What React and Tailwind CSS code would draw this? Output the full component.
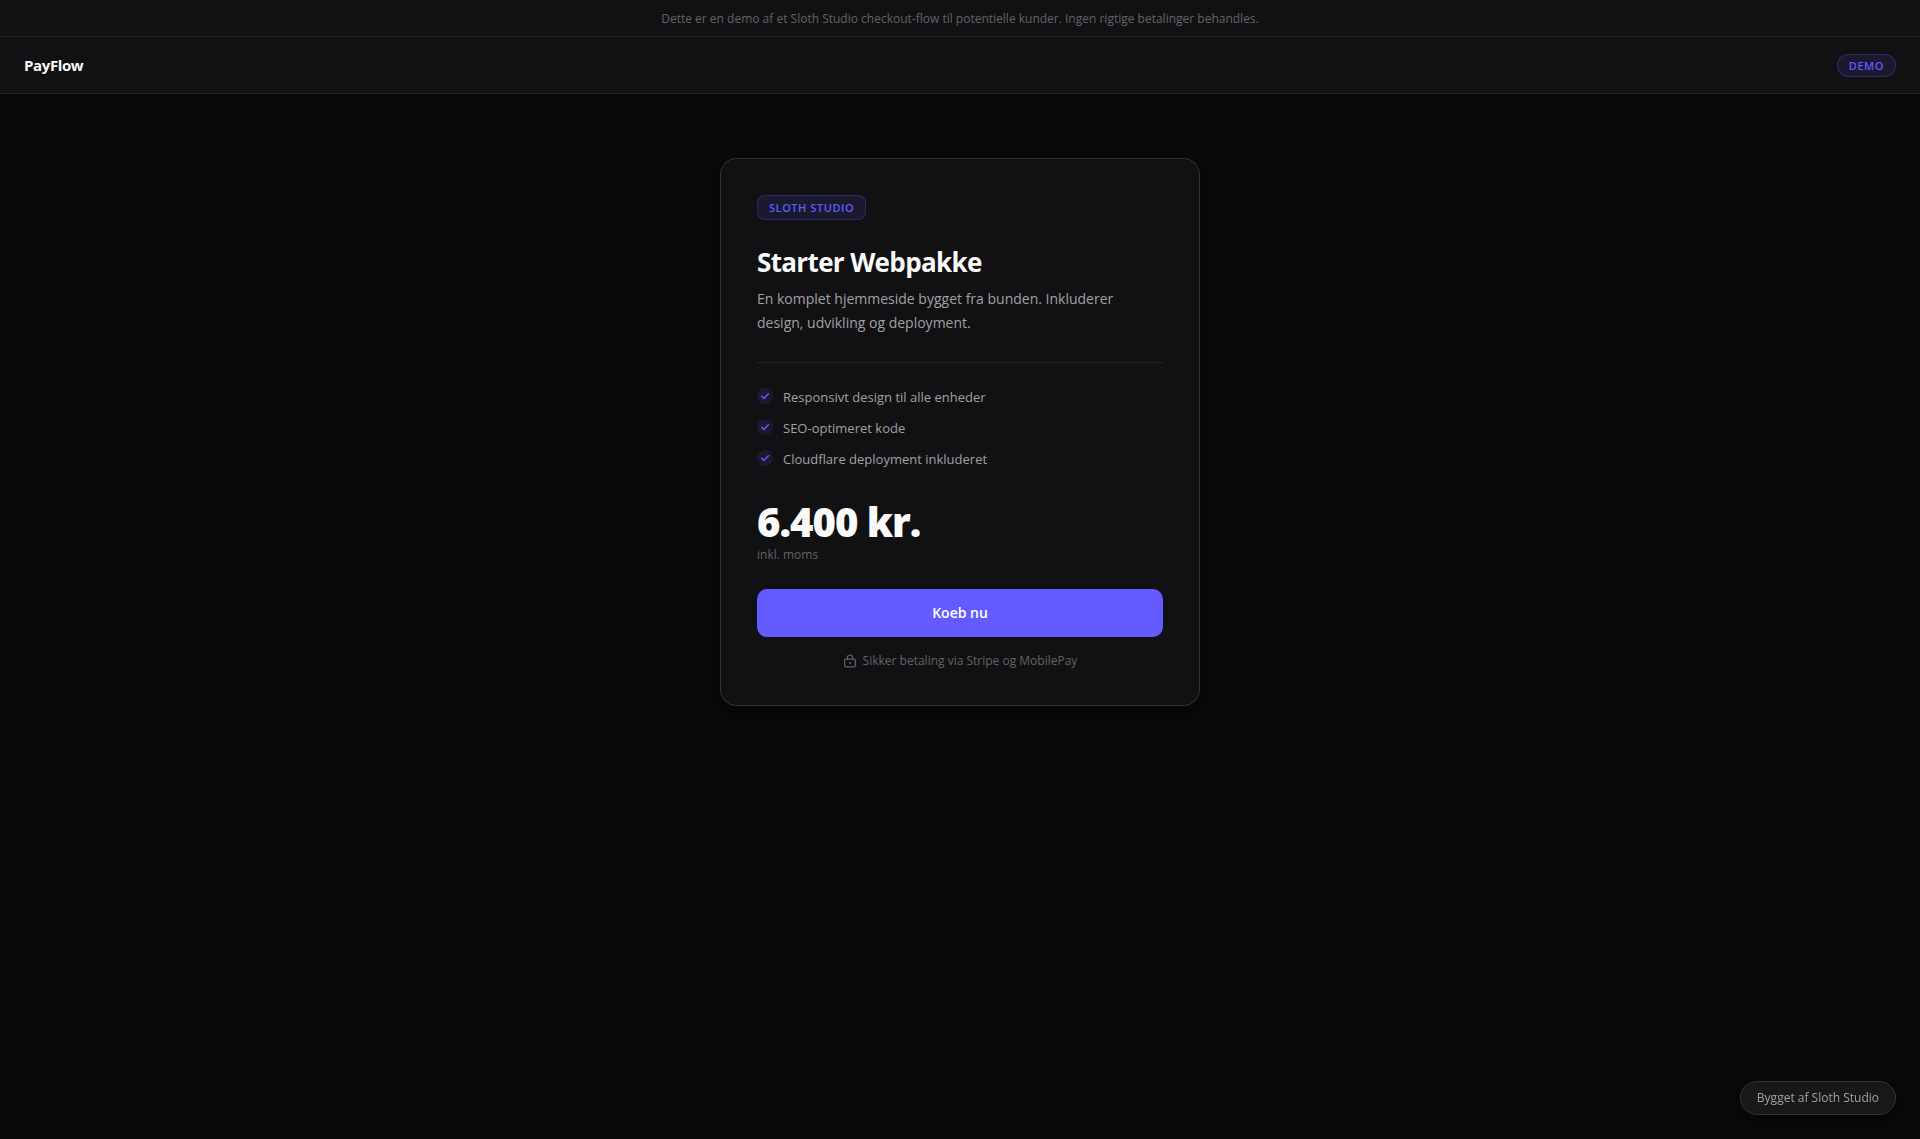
import React from 'react';

const features = [
  'Responsivt design til alle enheder',
  'SEO-optimeret kode',
  'Cloudflare deployment inkluderet',
];

const CheckIcon = () => (
  <svg width="16" height="16" viewBox="0 0 16 16" fill="none" className="mt-px shrink-0" aria-hidden="true">
    <circle cx="8" cy="8" r="8" fill="#635bff" fillOpacity="0.12" />
    <path d="M4.7 8.3l2.2 2.1 4.5-4.6" stroke="#635bff" strokeWidth="1.5" strokeLinecap="round" strokeLinejoin="round" />
  </svg>
);

const LockIcon = () => (
  <svg width="14" height="14" viewBox="0 0 14 14" fill="none" className="shrink-0" aria-hidden="true">
    <rect x="1.6" y="5.2" width="10.8" height="7.6" rx="1.6" stroke="currentColor" strokeWidth="1.2" />
    <path d="M4.4 5.2V3.6a2.6 2.6 0 0 1 5.2 0v1.6" stroke="currentColor" strokeWidth="1.2" strokeLinecap="round" />
    <circle cx="7" cy="9" r="1" fill="currentColor" />
  </svg>
);

const App = () => {
  return (
    <div className="min-h-screen flex flex-col bg-[#09090b] text-[#fafafa] font-['Open_Sans','Noto_Sans',sans-serif]">
      {/* DEMO NOTICE */}
      <div className="px-6 pt-[9px] pb-[7px] bg-[#111113] border-b border-[#222225] text-center text-xs leading-5 text-[#636366]">
        Dette er en demo af et Sloth Studio checkout-flow til potentielle kunder. Ingen rigtige betalinger behandles.
      </div>

      {/* HEADER */}
      <header className="px-6 py-4 flex items-center justify-between bg-[#111113] border-b border-[#222225]">
        <a href="#" className="text-[15px] leading-6 font-bold tracking-tight">PayFlow</a>
        <span className="px-[11px] py-[3px] rounded-full border border-[#635bff]/25 bg-[#635bff]/12 text-[11px] leading-[15px] font-semibold tracking-wider text-[#635bff]">
          DEMO
        </span>
      </header>

      {/* PRODUCT */}
      <main className="flex-1 flex justify-center items-start px-6 py-16">
        <section className="w-full max-w-[480px] p-9 rounded-2xl bg-[#111113] border border-[#333336] shadow-[0_4px_24px_rgba(0,0,0,0.4)]">
          <span className="inline-block px-[11px] py-1 rounded-lg border border-[#635bff]/25 bg-[#635bff]/12 text-[11px] leading-[15px] font-semibold tracking-wider text-[#635bff] align-top">
            SLOTH STUDIO
          </span>

          <h1 className="mt-6 text-[26px] leading-9 font-bold tracking-tight">Starter Webpakke</h1>
          <p className="mt-[7px] text-sm leading-6 text-[#a1a1a4]">
            En komplet hjemmeside bygget fra bunden. Inkluderer design, udvikling og deployment.
          </p>

          <hr className="mt-[27px] mb-6 border-[#222225]" />

          <ul className="flex flex-col gap-[10px]">
            {features.map((feature) => (
              <li key={feature} className="flex items-start gap-[10px] text-[13px] leading-[21px] text-[#a1a1a4]">
                <CheckIcon />
                {feature}
              </li>
            ))}
          </ul>

          <div className="mt-8">
            <p className="text-[40px] leading-10 font-extrabold tracking-tight">6.400 kr.</p>
            <p className="mt-[3px] text-xs leading-5 text-[#636366]">inkl. moms</p>
          </div>

          <button type="button" className="mt-6 w-full h-12 rounded-[10px] bg-[#635bff] hover:bg-[#5249f0] text-sm font-semibold text-white cursor-pointer transition-colors">
            Koeb nu
          </button>

          <p className="mt-4 flex items-center justify-center gap-[6px] text-xs leading-4 text-[#636366]">
            <LockIcon />
            Sikker betaling via Stripe og MobilePay
          </p>
        </section>
      </main>

      {/* FLOATING CREDIT */}
      <a href="#" className="fixed right-6 bottom-6 px-4 py-[7px] rounded-full bg-[#18181b] border border-[#333336] text-xs leading-[18px] font-medium text-[#a1a1a4] shadow-[0_4px_16px_rgba(0,0,0,0.4)]">
        Bygget af Sloth Studio
      </a>
    </div>
  );
};

export default App;
